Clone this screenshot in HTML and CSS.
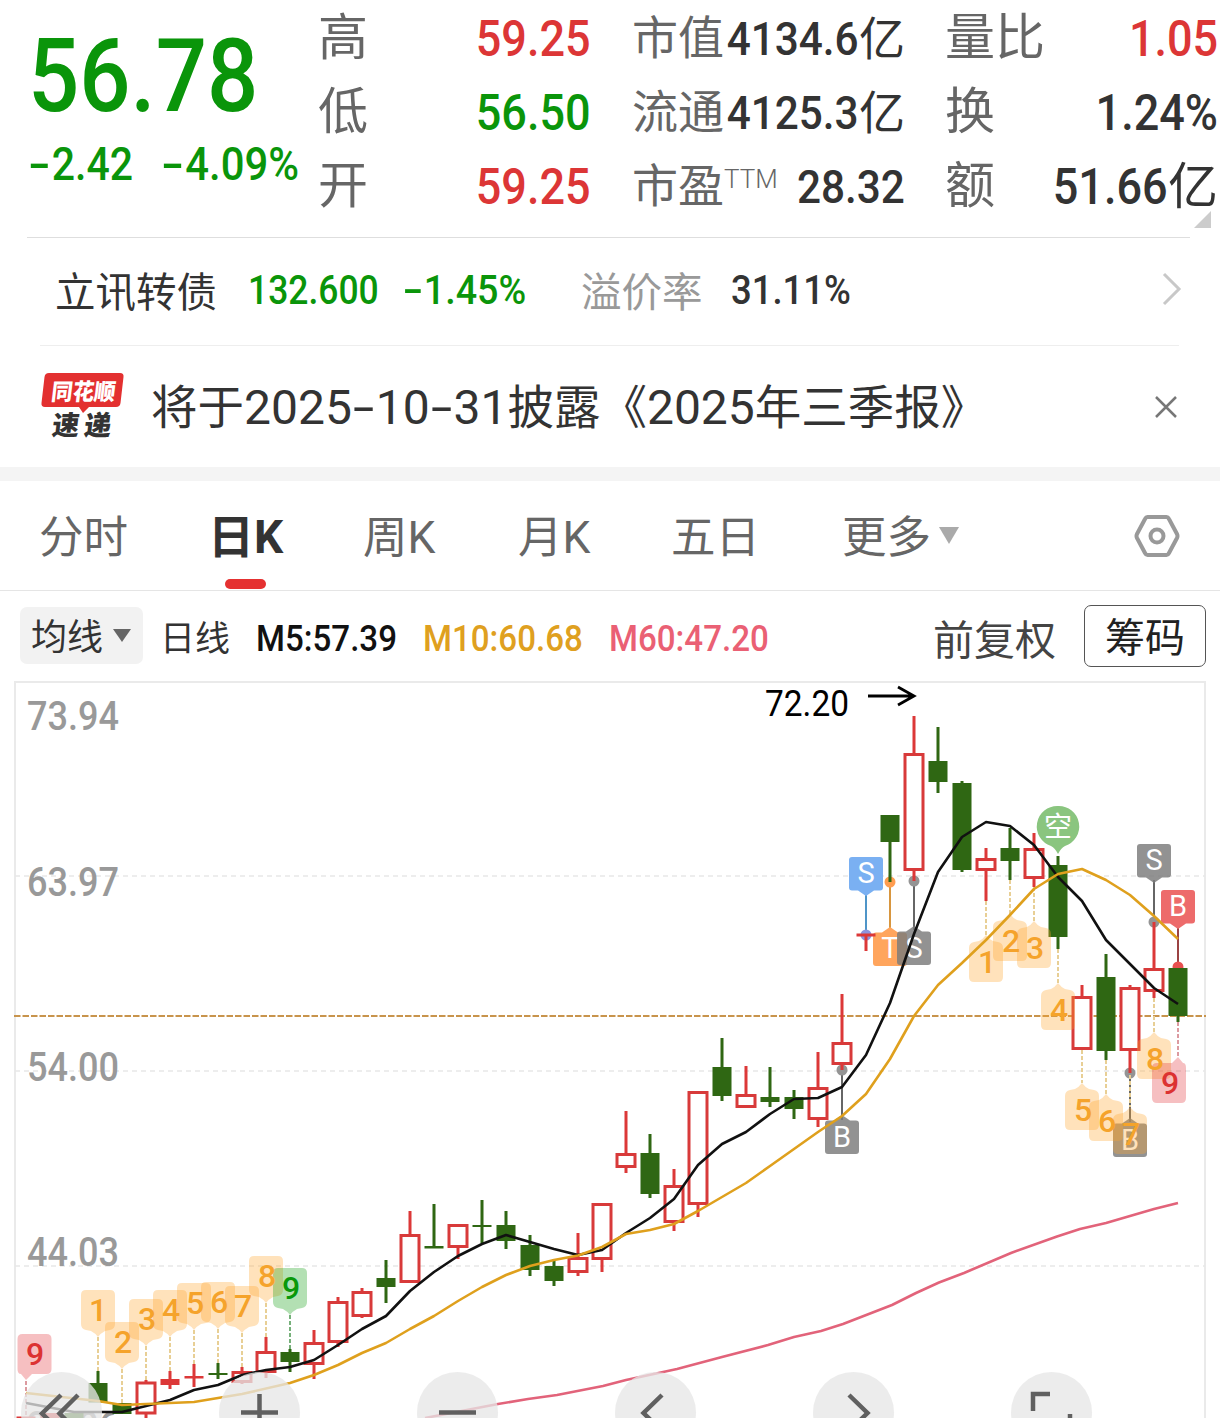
FILE: index.html
```html
<!DOCTYPE html>
<html lang="zh-CN">
<head>
<meta charset="utf-8">
<title>立讯 日K</title>
<link rel="stylesheet" href="styles.css">
</head>
<body>
<header class="quote">
  <div class="price">
    <div class="last down"><span class="num">56.78</span></div>
    <div class="change down"><span class="num"><i class="dash">-</i>2.42</span><span class="num"><i class="dash">-</i>4.09%</span></div>
  </div>
  <dl class="stats s1">
    <div><dt>高</dt><dd class="up"><span class="num">59.25</span></dd></div>
    <div><dt>低</dt><dd class="down"><span class="num">56.50</span></dd></div>
    <div><dt>开</dt><dd class="up"><span class="num">59.25</span></dd></div>
  </dl>
  <dl class="stats s2">
    <div><dt>市值</dt><dd><span class="num">4134.6</span>亿</dd></div>
    <div><dt>流通</dt><dd><span class="num">4125.3</span>亿</dd></div>
    <div><dt>市盈<sup>TTM</sup></dt><dd><span class="num">28.32</span></dd></div>
  </dl>
  <dl class="stats s3">
    <div><dt>量比</dt><dd class="up"><span class="num">1.05</span></dd></div>
    <div><dt>换</dt><dd><span class="num">1.24%</span></dd></div>
    <div><dt>额</dt><dd><span class="num">51.66</span>亿</dd></div>
  </dl>
  <i class="corner"></i>
</header>

<section class="bond">
  <span class="name">立讯转债</span>
  <span class="down"><span class="num value">132.600</span></span>
  <span class="down"><span class="num rate"><i class="dash">-</i>1.45%</span></span>
  <span class="muted">溢价率</span>
  <span class="num">31.11%</span>
  <svg class="chev" width="22" height="36" viewBox="0 0 22 36"><path d="M3 3L18 18L3 33"/></svg>
</section>

<section class="news">
  <svg class="logo" width="84" height="70" viewBox="0 0 84 70">
    <path d="M8 1H79Q83 1 82.500 5L79.500 31Q79 35 75 35H48L42 41L38 35H4Q0 35 .500 31L3.500 5Q4 1 8 1Z" fill="#e33030"/>
    <text x="12" y="28" class="l1" textLength="64" lengthAdjust="spacingAndGlyphs" transform="translate(1 0) skewX(-7)">同花顺</text>
    <text x="18" y="63" class="l2" textLength="27" lengthAdjust="spacingAndGlyphs" transform="skewX(-7)">速</text>
    <text x="50" y="63" class="l2" textLength="27" lengthAdjust="spacingAndGlyphs" transform="skewX(-7)">递</text>
  </svg>
  <p>将于<span class="date">2025<i class="dash">-</i>10<i class="dash">-</i>31</span>披露《<span class="date">2025</span>年三季报》</p>
  <svg width="24" height="24" viewBox="0 0 24 24" class="close"><path d="M2 2L22 22M22 2L2 22"/></svg>
</section>

<nav class="tabs">
  <span>分时</span>
  <span class="active">日K</span>
  <span>周K</span>
  <span>月K</span>
  <span>五日</span>
  <span class="more">更多<svg width="22" height="18" viewBox="0 0 22 18"><path d="M1 1H21L11 18Z" fill="#aaa"/></svg></span>
  <svg class="gear" width="46" height="44" viewBox="0 0 46 44"><path d="M13.500 3H32.500Q34 3 35 5L43 20Q44 22 43 24L35 39Q34 41 32.500 41H13.500Q12 41 11 39L3 24Q2 22 3 20L11 5Q12 3 13.500 3Z"/><circle cx="23" cy="22" r="6.500"/></svg>
</nav>

<div class="legend">
  <span class="chip">均线<svg width="18" height="13" viewBox="0 0 18 13"><path d="M0 0H18L9 13Z" fill="#666"/></svg></span>
  <span class="period">日线</span>
  <span class="num m5">M5:57.39</span>
  <span class="num m10">M10:60.68</span>
  <span class="num m60">M60:47.20</span>
  <span class="adj">前复权</span>
  <span class="btn">筹码</span>
</div>

<svg class="chart" width="1220" height="738" viewBox="0 680 1220 738">
  <defs>
    <path id="tagUp" d="M-12 -20H12Q17 -20 17 -15V14Q17 19 12 20L7 21Q3 23 0 27Q-3 23 -7 21L-12 20Q-17 19 -17 14V-15Q-17 -20 -12 -20Z"/>
    <path id="tagDown" d="M-12 20H12Q17 20 17 15V-14Q17 -19 12 -20L7 -21Q3 -23 0 -27Q-3 -23 -7 -21L-12 -20Q-17 -19 -17 -14V15Q-17 20 -12 20Z"/>
    <path id="signUp" d="M-14 -17H14Q17 -17 17 -14V13.500Q17 16.500 14 16.500H8L0 22L-8 16.500H-14Q-17 16.500 -17 13.500V-14Q-17 -17 -14 -17Z"/>
    <path id="signDown" d="M-14 17H14Q17 17 17 14V-13.500Q17 -16.500 14 -16.500H8L0 -22L-8 -16.500H-14Q-17 -16.500 -17 -13.500V14Q-17 17 -14 17Z"/>
  </defs>

  <path class="frame" d="M15 1418V682H1205V1418"/>
  <path class="grid" d="M15 876H1205M15 1071H1205M15 1266H1205"/>
  <g class="axis">
    <text x="27" y="730" textLength="92" lengthAdjust="spacingAndGlyphs">73.94</text>
    <text x="27" y="896" textLength="92" lengthAdjust="spacingAndGlyphs">63.97</text>
    <text x="27" y="1081" textLength="92" lengthAdjust="spacingAndGlyphs">54.00</text>
    <text x="27" y="1266" textLength="92" lengthAdjust="spacingAndGlyphs">44.03</text>
    <text x="27" y="1440" textLength="92" lengthAdjust="spacingAndGlyphs">34.06</text>
  </g>
  <path class="cost" d="M14 1016H1206"/>

  <!-- trade marks -->
  <path d="M866 894V935" stroke="#4f95c8" stroke-width="2"/><circle cx="866" cy="935" r="5.500" fill="#8d94e0"/>
  <path d="M890 882V930" stroke="#d8963f" stroke-width="2"/><circle cx="890" cy="882" r="5.500" fill="#ff9d50"/>
  <path d="M914 881V930M842 1070V1120M1130 1073V1122M1154 880V922" stroke="#666" stroke-width="2"/>
  <g fill="#949494"><circle cx="914" cy="881" r="5.500"/><circle cx="842" cy="1070" r="5.500"/><circle cx="1130" cy="1073" r="5.500"/><circle cx="1154" cy="922" r="5.500"/></g>
  <path d="M1178 926V968" stroke="#9b4343" stroke-width="2"/><circle cx="1178" cy="967" r="5.500" fill="#e85050"/>
  <use href="#signUp" x="866" y="874" fill="#7ab0f2"/>
  <use href="#signDown" x="890" y="949" fill="#ffa55d"/>
  <text class="sign" x="890" y="958">T</text>
  <g fill="#7c7c7c" fill-opacity=".83">
    <use href="#signDown" x="914" y="948"/><use href="#signDown" x="842" y="1137"/><use href="#signDown" x="1130" y="1140"/><use href="#signUp" x="1154" y="861"/>
  </g>
  <use href="#signUp" x="1178" y="907" fill="#ed6b6b"/>
  <g class="sign"><text x="866" y="883">S</text><text x="914" y="958">S</text><text x="842" y="1147">B</text><text x="1130" y="1150">B</text><text x="1154" y="870">S</text><text x="1178" y="916">B</text></g>

  <!-- falling candles: wicks, then bodies -->
  <path class="wick fall" d="M98 1371V1402M218 1363V1379M290 1349V1372M386 1260V1303M434 1204V1248M482 1200V1243M506 1211V1249M530 1235V1276M554 1259V1286M650 1134V1198M722 1038V1101M770 1067V1107M794 1090V1119M890 815V882M938 727V793M962 781V872M1010 828V880M1058 856V949M1106 954V1060M1178 968V1022"/>
  <path class="body fall" d="M74 1413V1418M98 1383V1402.500M122 1403V1414M218 1373V1375M290 1352V1362M386 1278V1287M434 1246V1248.500M482 1225V1227M506 1225V1241M530 1245V1270M554 1266V1281M650 1153V1194M722 1067V1096M770 1097V1102M794 1097V1109M890 815V842M938 761V782M962 783V870M1010 848V861M1058 865V937M1106 977V1051M1178 968V1016"/>
  <!-- rising candles -->
  <path class="wick rise" d="M146 1380V1418M170 1371V1389M194 1364V1387M242 1367V1384M266 1337V1378M314 1330V1379M338 1297V1347M362 1288V1318M410 1211V1283M458 1226V1259M578 1233V1276M602 1205V1272M626 1111V1173M674 1169V1231M698 1093V1217M746 1066V1106M818 1052V1127M842 994V1070M866 935V951M914 716V881M986 848V901M1034 833V887M1082 985V1049M1130 985V1073M1154 922V998"/>
  <path class="body rise" d="M26 1416.500V1418M50 1413V1418M170 1379V1385M194 1376V1378.500M866 933.500V936.500"/>
  <path class="hollow" d="M137 1383h18v30h-18zM233 1372.500h18v9h-18zM257 1352.500h18v19h-18zM305 1343.500h18v20h-18zM329 1302.500h18v39h-18zM353 1292.500h18v23h-18zM401 1235.500h18v46h-18zM449 1225.500h18v21h-18zM569 1258.500h18v13h-18zM593 1204.500h18v54h-18zM617 1154.500h18v12h-18zM665 1186.500h18v35h-18zM689 1092.500h18v111h-18zM737 1095.500h18v11h-18zM809 1088.500h18v30h-18zM833 1043.500h18v20h-18zM905 754.500h18v115h-18zM977 859.500h18v10h-18zM1025 849.500h18v28h-18zM1073 997.500h18v51h-18zM1121 988.500h18v61h-18zM1145 969.500h18v21h-18z"/>

  <!-- nine-count tags -->
  <path class="lead" d="M98 1337V1371M122 1369V1403M146 1346V1380M170 1337V1371M194 1330V1364M218 1329V1363M242 1333V1367M266 1303V1337M986 901V935M1010 880V916M1034 887V921M1058 949V983M1082 1050V1083M1106 1060V1094M1130 1075V1107M1154 998V1032"/>
  <path class="lead g" d="M290 1315V1349"/>
  <path class="lead r" d="M26 1381V1416M1178 1022V1056"/>
  <g fill="#ffa42c" fill-opacity=".32">
    <use href="#tagUp" x="98" y="1310"/><use href="#tagUp" x="122" y="1342"/><use href="#tagUp" x="146" y="1319"/><use href="#tagUp" x="170" y="1310"/><use href="#tagUp" x="194" y="1303"/><use href="#tagUp" x="218" y="1302"/><use href="#tagUp" x="242" y="1306"/><use href="#tagUp" x="266" y="1276"/>
    <use href="#tagDown" x="986" y="962"/><use href="#tagDown" x="1010" y="941"/><use href="#tagDown" x="1034" y="948"/><use href="#tagDown" x="1058" y="1010"/><use href="#tagDown" x="1082" y="1110"/><use href="#tagDown" x="1106" y="1121"/><use href="#tagDown" x="1130" y="1134"/><use href="#tagDown" x="1154" y="1059"/>
  </g>
  <use href="#tagUp" x="290" y="1288" fill="#14a014" fill-opacity=".32"/>
  <path d="M22.500 1334H46.500Q51.500 1334 51.500 1339V1369Q51.500 1374 46.500 1374H32L26 1380L21 1374Q17.500 1374 17.500 1369V1339Q17.500 1334 22.500 1334ZM1157 1103H1181Q1186 1103 1186 1098V1068Q1186 1063 1183 1063L1178 1057L1172 1063H1157Q1152 1063 1152 1068V1098Q1152 1103 1157 1103Z" fill="#e02c32" fill-opacity=".3"/>
  <g class="count">
    <text x="98" y="1321">1</text><text x="123" y="1353">2</text><text x="147" y="1330">3</text><text x="171" y="1321">4</text><text x="195" y="1314">5</text><text x="219" y="1313">6</text><text x="243" y="1317">7</text><text x="267" y="1287">8</text>
    <text x="987" y="973">1</text><text x="1011" y="952">2</text><text x="1035" y="959">3</text><text x="1059" y="1021">4</text><text x="1083" y="1121">5</text><text x="1107" y="1132">6</text><text x="1131" y="1145">7</text><text x="1155" y="1070">8</text>
    <text x="291" y="1299" fill="#0a980a">9</text><text x="35" y="1365" fill="#dc3232">9</text><text x="1170" y="1094" fill="#dc3232">9</text>
  </g>

  <polyline class="ma" stroke="#e2637a" points="425,1418 498,1404 528,1399 557,1395 603,1386 626,1380 677,1369 722,1357 768,1345 794,1337 821,1331 843,1324 892,1305 916,1293 939,1282.500 964,1273 1011,1253 1057,1236.500 1080,1229 1106,1223 1154,1209 1178,1203"/>
  <polyline class="ma" stroke="#111" points="26,1403 74,1412 122,1412 146,1406 170,1400 194,1390 218,1385 242,1375 266,1370 290,1367 314,1360 338,1345 362,1329 386,1316 410,1291 434,1272 458,1256 482,1244 506,1235 530,1242 554,1249 578,1255 602,1250 626,1233 650,1218 674,1199 698,1165 722,1144 746,1132 770,1114 794,1099 818,1098 842,1087 866,1055 890,1003 914,934 938,872 962,837 986,822 1010,826 1034,845 1058,877 1082,901 1106,940 1130,964 1154,988 1178,1004"/>
  <polyline class="ma" stroke="#dfa01d" points="26,1393 98,1401 122,1405 194,1402 242,1394 290,1383 314,1375 338,1365 362,1353 386,1343 410,1329 434,1316 458,1301 482,1287 506,1275 530,1266 554,1260 578,1255.500 602,1247 626,1234 650,1230 674,1224 698,1211 722,1197 746,1183 770,1166 818,1132 842,1116 866,1094 890,1059 914,1016 938,985 962,963 986,940 1010,915 1034,889 1058,874 1082,869 1106,880 1130,895 1154,916 1178,939"/>

  <path d="M1058 806A20.500 20.500 0 0 1 1065 846Q1061 848 1058 854Q1055 848 1051 846A20.500 20.500 0 0 1 1058 806Z" fill="#8ac57f"/>
  <text x="1058" y="837" class="short">空</text>

  <text x="765" y="716" class="peak" textLength="84" lengthAdjust="spacingAndGlyphs">72.20</text>
  <path d="M868 696H914M898 687L914 696L898 705" fill="none" stroke="#000" stroke-width="2.800"/>

  <g fill="#e6e6e6" fill-opacity=".77">
    <circle cx="61.500" cy="1412.500" r="40.500"/><circle cx="259.500" cy="1412.500" r="40.500"/><circle cx="457.500" cy="1412.500" r="40.500"/><circle cx="655.500" cy="1412.500" r="40.500"/><circle cx="853.500" cy="1412.500" r="40.500"/><circle cx="1051.500" cy="1412.500" r="40.500"/>
  </g>
  <path class="ctl" d="M61 1395L42 1413.500L61 1432M78 1395L59.500 1413.500L78 1432M241 1412.500H278M259.500 1394V1431M439 1412.500H476M662 1395L643.500 1413L662 1431M849 1395L867.500 1413L849 1431M1050 1394H1033V1411M1070 1414V1431H1053"/>
</svg>
</body>
</html>
```
FILE: styles.css
```css
* { box-sizing: border-box; }
body {
  margin: 0;
  width: 1220px;
  height: 1418px;
  overflow: hidden;
  background: #fff;
  color: #333;
  font-family: Roboto, "Noto Sans CJK SC", sans-serif;
}
dl, dd, p { margin: 0; }
svg { display: block; flex: none; }
i { font-style: normal; }
.up { color: #dc3636; }
.down { color: #0a950a; }
.num { display: inline-block; font-weight: 500; transform: scaleX(.9); transform-origin: left; white-space: nowrap; }
.dash { display: inline-block; transform: scaleX(1.6); margin: 0 .12em; }

.quote {
  position: relative;
  display: grid;
  grid-template-columns: 288px 273px 41px 273px 40px 273px;
  height: 237px;
  padding-left: 30px;
}
.quote::after {
  content: "";
  position: absolute;
  left: 27px; right: 30px; bottom: -1px;
  border-bottom: 1px solid #dedede;
}
.price { margin-left: -2px; }
.last { font-size: 102px; line-height: 120px; margin-top: 16px; height: 120px; }
.last .num { transform: scaleX(.885); }
.change { display: flex; padding-top: 1px; font-size: 45.500px; line-height: 56px; }
.change .num { width: 133px; }
.change .num + .num { transform: scaleX(.92); }
.stats { padding-top: 1px; }
.s1 { grid-column: 2; }
.s2 { grid-column: 4; }
.s3 { grid-column: 6; }
.stats div {
  display: flex;
  justify-content: space-between;
  height: 74px;
  line-height: 74px;
  font-size: 50px;
  white-space: nowrap;
}
.stats dt { color: #666; }
.stats dd { padding-top: 1px; }
.stats .num { transform-origin: right; }
.s2 .num { margin-left: -15px; font-size: 47px; }
.stats.s2 div { font-size: 46px; }
.stats sup { font-size: 26px; font-weight: 300; line-height: 0; vertical-align: 14px; }
.corner {
  position: absolute;
  right: 9px; bottom: 9px;
  border-style: solid;
  border-width: 0 0 17px 17px;
  border-color: transparent transparent #ccc transparent;
}

.bond {
  display: grid;
  grid-template-columns: 193px 154px 179px 150px 1fr auto;
  align-items: center;
  height: 108px;
  margin: 1px 41px 0 40px;
  padding: 0 0 5px 15px;
  border-bottom: 1px solid #eee;
  font-size: 40.500px;
}
.bond .num { padding-top: 2px; }
.bond .value { transform: scaleX(.875); }
.bond .rate { transform: scaleX(.93); }
.bond .muted { color: #999; }
.chev { fill: none; stroke: #c8c8c8; stroke-width: 3; margin-right: -4px; }

.news {
  display: flex;
  align-items: center;
  height: 121px;
  padding: 0 42px 0 41px;
}
.news p { flex: 1; margin-left: 26px; padding-bottom: 6px; font-size: 46.500px; white-space: nowrap; }
.date { font-size: 48px; }
.news .dash { margin: 0 .11em; }
.close { fill: none; stroke: #777; stroke-width: 2.500; }
.l1, .l2 { font: 900 23px "Noto Sans CJK SC", sans-serif; fill: #fff; }
.l2 { font-size: 27px; fill: #333; }

.tabs {
  display: grid;
  grid-template-columns: 171px 153px 155px 153px 171px 1fr auto;
  align-items: center;
  height: 124px;
  padding: 0 40px 0 39px;
  border-top: 14px solid #f4f4f4;
  border-bottom: 1px solid #e5e5e5;
  font-size: 44.500px;
  color: #666;
}
.tabs span { padding-bottom: 5px; }
.tabs .active { position: relative; left: -2px; font-size: 46px; font-weight: 700; color: #333; }
.tabs .active::after {
  content: "";
  position: absolute;
  left: 17px; bottom: -18px;
  width: 41px; height: 10px;
  border-radius: 5px;
  background: #e53131;
}
.more { display: flex; align-items: center; gap: 7px; }
.more svg { margin-top: 4px; }
.gear { fill: none; stroke: #999; stroke-width: 4; }

.legend {
  display: flex;
  align-items: center;
  height: 89px;
  padding: 0 14px 0 20px;
  font-size: 36px;
}
.chip {
  display: flex;
  align-items: center;
  gap: 10px;
  width: 123px; height: 57px;
  padding: 0 0 3px 11px;
  border-radius: 7px;
  background: #f2f2f2;
}
.chip svg { margin-top: 3px; }
.period { width: 97px; margin-left: 16px; padding-left: 1px; font-size: 35px; }
.legend .num { width: 167px; padding-top: 6px; transform: scaleX(.92); }
.legend .m10, .legend .m60 { width: 186px; }
.m5 { color: #111; }
.m10 { color: #dfa020; }
.m60 { color: #ea6074; }
.adj { margin-left: auto; padding-top: 2px; font-size: 41px; color: #444; white-space: nowrap; }
.btn {
  width: 122px; height: 62px;
  margin-left: 28px;
  border: 1px solid #555;
  border-radius: 7px;
  font-size: 40px;
  line-height: 65px;
  text-align: center;
  color: #222;
}

.frame { fill: none; stroke: #eaeaea; stroke-width: 2; }
.grid { stroke: #e8e8e8; stroke-width: 1.500; stroke-dasharray: 5 4; }
.axis { font-size: 40px; font-weight: 500; fill: #999; }
.cost { stroke: #c8944c; stroke-width: 1.800; stroke-dasharray: 6.500 2; }
.wick { stroke-width: 3; }
.body { stroke-width: 19; }
.fall { stroke: #2f6713; }
.rise { stroke: #dc3838; }
.hollow { fill: #fff; stroke: #d83a3a; stroke-width: 3; }
.lead { stroke: #e8cf95; stroke-width: 2; stroke-dasharray: 4 2; }
.lead.g { stroke: #76b07a; }
.lead.r { stroke: #dc9aa0; }
.ma { fill: none; stroke-width: 2.600; stroke-linejoin: round; }
.sign { font-size: 29px; fill: #fff; text-anchor: middle; }
.count { font-size: 32px; font-weight: 500; fill: #f5a32b; text-anchor: middle; }
.short { font: 400 28px "Noto Sans CJK SC", sans-serif; fill: #fff; text-anchor: middle; }
.peak { font-size: 36px; fill: #000; }
.ctl { fill: none; stroke: #606060; stroke-width: 4.500; }
```
